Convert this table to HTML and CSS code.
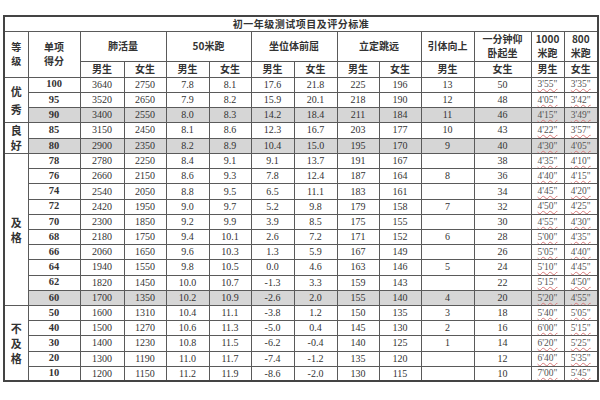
FILE: index.html
```html
<!DOCTYPE html>
<html lang="zh">
<head>
<meta charset="utf-8">
<title>初一年级测试项目及评分标准</title>
<link rel="stylesheet" href="styles.css">
</head>
<body>
<table class="grid">
<colgroup>
<col class="c-grade"><col class="c-score"><col class="c-a"><col class="c-b"><col class="c-c"><col class="c-b"><col class="c-c"><col class="c-c"><col class="c-b"><col class="c-b"><col class="c-pull"><col class="c-sit"><col class="c-run"><col class="c-run2">
</colgroup>
<thead>
<tr class="r-title"><th colspan="14" class="title">初一年级测试项目及评分标准</th></tr>
<tr class="r-h1">
<th rowspan="2">等<br>级</th>
<th rowspan="2">单项<br>得分</th>
<th colspan="2">肺活量</th>
<th colspan="2">50米跑</th>
<th colspan="2">坐位体前屈</th>
<th colspan="2">立定跳远</th>
<th>引体向上</th>
<th>一分钟仰<br>卧起坐</th>
<th>1000<br>米跑</th>
<th>800<br>米跑</th>
</tr>
<tr class="r-h2">
<th>男生</th><th>女生</th><th>男生</th><th>女生</th><th>男生</th><th>女生</th><th>男生</th><th>女生</th><th>男生</th><th>女生</th><th>男生</th><th>女生</th>
</tr>
</thead>
<tbody>
<tr><th rowspan="3" class="grade wide">优<br>秀</th><td class="sc">100</td><td>3640</td><td>2750</td><td>7.8</td><td>8.1</td><td>17.6</td><td>21.8</td><td>225</td><td>196</td><td>13</td><td>50</td><td><span class="t">3'55"</span></td><td><span class="t">3'35"</span></td></tr>
<tr><td class="sc">95</td><td>3520</td><td>2650</td><td>7.9</td><td>8.2</td><td>15.9</td><td>20.1</td><td>218</td><td>190</td><td>12</td><td>48</td><td><span class="t">4'05"</span></td><td><span class="t">3'42"</span></td></tr>
<tr class="hl"><td class="sc">90</td><td>3400</td><td>2550</td><td>8.0</td><td>8.3</td><td>14.2</td><td>18.4</td><td>211</td><td>184</td><td>11</td><td>46</td><td><span class="t">4'15"</span></td><td><span class="t">3'49"</span></td></tr>
<tr><th rowspan="2" class="grade">良<br>好</th><td class="sc">85</td><td>3150</td><td>2450</td><td>8.1</td><td>8.6</td><td>12.3</td><td>16.7</td><td>203</td><td>177</td><td>10</td><td>43</td><td><span class="t">4'22"</span></td><td><span class="t">3'57"</span></td></tr>
<tr class="hl"><td class="sc">80</td><td>2900</td><td>2350</td><td>8.2</td><td>8.9</td><td>10.4</td><td>15.0</td><td>195</td><td>170</td><td>9</td><td>40</td><td><span class="t">4'30"</span></td><td><span class="t">4'05"</span></td></tr>
<tr><th rowspan="10" class="grade">及<br>格</th><td class="sc">78</td><td>2780</td><td>2250</td><td>8.4</td><td>9.1</td><td>9.1</td><td>13.7</td><td>191</td><td>167</td><td></td><td>38</td><td><span class="t">4'35"</span></td><td><span class="t">4'10"</span></td></tr>
<tr><td class="sc">76</td><td>2660</td><td>2150</td><td>8.6</td><td>9.3</td><td>7.8</td><td>12.4</td><td>187</td><td>164</td><td>8</td><td>36</td><td><span class="t">4'40"</span></td><td><span class="t">4'15"</span></td></tr>
<tr><td class="sc">74</td><td>2540</td><td>2050</td><td>8.8</td><td>9.5</td><td>6.5</td><td>11.1</td><td>183</td><td>161</td><td></td><td>34</td><td><span class="t">4'45"</span></td><td><span class="t">4'20"</span></td></tr>
<tr><td class="sc">72</td><td>2420</td><td>1950</td><td>9.0</td><td>9.7</td><td>5.2</td><td>9.8</td><td>179</td><td>158</td><td>7</td><td>32</td><td><span class="t">4'50"</span></td><td><span class="t">4'25"</span></td></tr>
<tr><td class="sc">70</td><td>2300</td><td>1850</td><td>9.2</td><td>9.9</td><td>3.9</td><td>8.5</td><td>175</td><td>155</td><td></td><td>30</td><td><span class="t">4'55"</span></td><td><span class="t">4'30"</span></td></tr>
<tr><td class="sc">68</td><td>2180</td><td>1750</td><td>9.4</td><td>10.1</td><td>2.6</td><td>7.2</td><td>171</td><td>152</td><td>6</td><td>28</td><td><span class="t">5'00"</span></td><td><span class="t">4'35"</span></td></tr>
<tr><td class="sc">66</td><td>2060</td><td>1650</td><td>9.6</td><td>10.3</td><td>1.3</td><td>5.9</td><td>167</td><td>149</td><td></td><td>26</td><td><span class="t">5'05"</span></td><td><span class="t">4'40"</span></td></tr>
<tr><td class="sc">64</td><td>1940</td><td>1550</td><td>9.8</td><td>10.5</td><td>0.0</td><td>4.6</td><td>163</td><td>146</td><td>5</td><td>24</td><td><span class="t">5'10"</span></td><td><span class="t">4'45"</span></td></tr>
<tr><td class="sc">62</td><td>1820</td><td>1450</td><td>10.0</td><td>10.7</td><td>-1.3</td><td>3.3</td><td>159</td><td>143</td><td></td><td>22</td><td><span class="t">5'15"</span></td><td><span class="t">4'50"</span></td></tr>
<tr class="hl"><td class="sc">60</td><td>1700</td><td>1350</td><td>10.2</td><td>10.9</td><td>-2.6</td><td>2.0</td><td>155</td><td>140</td><td>4</td><td>20</td><td><span class="t">5'20"</span></td><td><span class="t">4'55"</span></td></tr>
<tr><th rowspan="5" class="grade">不<br>及<br>格</th><td class="sc">50</td><td>1600</td><td>1310</td><td>10.4</td><td>11.1</td><td>-3.8</td><td>1.2</td><td>150</td><td>135</td><td>3</td><td>18</td><td><span class="t">5'40"</span></td><td><span class="t">5'05"</span></td></tr>
<tr><td class="sc">40</td><td>1500</td><td>1270</td><td>10.6</td><td>11.3</td><td>-5.0</td><td>0.4</td><td>145</td><td>130</td><td>2</td><td>16</td><td><span class="t">6'00"</span></td><td><span class="t">5'15"</span></td></tr>
<tr><td class="sc">30</td><td>1400</td><td>1230</td><td>10.8</td><td>11.5</td><td>-6.2</td><td>-0.4</td><td>140</td><td>125</td><td>1</td><td>14</td><td><span class="t">6'20"</span></td><td><span class="t">5'25"</span></td></tr>
<tr><td class="sc">20</td><td>1300</td><td>1190</td><td>11.0</td><td>11.7</td><td>-7.4</td><td>-1.2</td><td>135</td><td>120</td><td></td><td>12</td><td><span class="t">6'40"</span></td><td><span class="t">5'35"</span></td></tr>
<tr><td class="sc">10</td><td>1200</td><td>1150</td><td>11.2</td><td>11.9</td><td>-8.6</td><td>-2.0</td><td>130</td><td>115</td><td></td><td>10</td><td><span class="t">7'00"</span></td><td><span class="t">5'45"</span></td></tr>
</tbody>
</table>
</body>
</html>
```

FILE: styles.css
```css
html, body {
  margin: 0;
  padding: 0;
  background: #ffffff;
}
body {
  padding: 15px 3px 0 3px;
  font-family: "Liberation Serif", "Noto Sans CJK SC", serif;
  color: #333333;
}
.grid {
  width: 594px;
  table-layout: fixed;
  border-collapse: collapse;
  border: 2px solid #444444;
  font-size: 10px;
  line-height: 1;
}
.c-grade { width: 24px; }
.c-score { width: 52px; }
.c-a { width: 44px; }
.c-b { width: 42px; }
.c-c { width: 43px; }
.c-pull { width: 53px; }
.c-sit { width: 57px; }
.c-run { width: 33px; }
.c-run2 { width: 34px; }
.grid th, .grid td {
  border: 1px solid #5a5a5a;
  padding: 0;
  text-align: center;
  vertical-align: middle;
  overflow: hidden;
  white-space: nowrap;
}
.grid th {
  font-family: "Noto Sans CJK SC", "Liberation Serif", sans-serif;
  font-weight: 700;
  font-size: 10px;
  color: #333333;
}
.r-title { height: 15px; }
.r-h1 { height: 30px; }
.r-h1 th { line-height: 14px; }
.r-h2 { height: 16px; }
.grid th.title {
  font-size: 10px;
  letter-spacing: 0.5px;
}
.grid tbody tr { height: 15.2px; }
.grid th.grade {
  font-size: 11px;
  line-height: 15px;
  background: #ffffff;
}
.grid th.grade.wide { line-height: 18px; }
.sc {
  font-weight: 700;
  font-size: 10.5px;
}
.hl td { background: #d6d6d6; }
.t {
  color: #555555;
  text-decoration: underline wavy #d97a7a;
  text-decoration-thickness: 1px;
  text-underline-offset: 1px;
  font-size: 9.5px;
}
```
